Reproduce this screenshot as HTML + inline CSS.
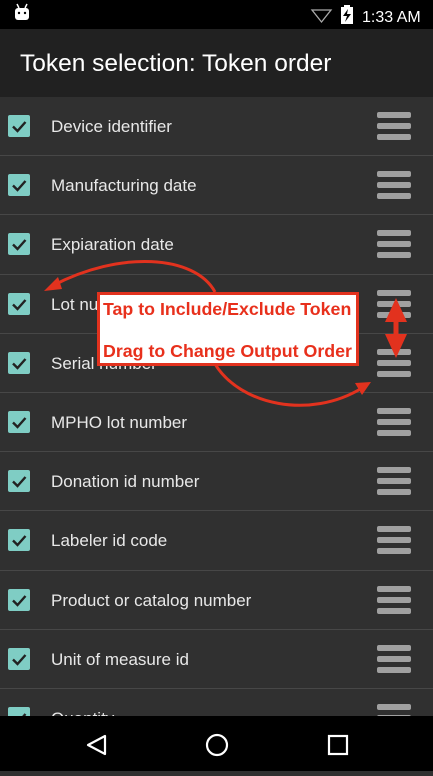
<!DOCTYPE html><html><head><style>
body{margin:0;width:433px;height:771px;overflow:hidden;background:#303030;font-family:"Liberation Sans",sans-serif;position:relative}
.sb{position:absolute;left:0;top:0;width:433px;height:29px;background:#000;color:#fff}
.ab{position:absolute;left:0;top:29px;width:433px;height:68px;background:#212121;color:#fff;font-size:24.5px}
.ab span{position:absolute;left:20px;top:21px}
.row{position:absolute;left:0;width:433px;height:59px;border-bottom:1px solid #474747;background:#303030}
.cb{position:absolute;left:8px;top:18px;width:22px;height:22px;background:#7fcdc4;border-radius:2px}
.row .t{position:absolute;left:51px;top:20px;color:#e8e8e8;font-size:17px}
.h{position:absolute;left:377px;width:34px;height:6px;background:#a0a0a0;border-radius:2px}
.nav{position:absolute;left:0;top:716px;width:433px;height:55px;background:#000}
.box{position:absolute;left:97px;top:292px;width:256px;height:68px;border:3px solid #e2321e;background:#fff;color:#e8301c;font-weight:bold;font-size:17.8px;white-space:nowrap}
</style></head><body>
<div class="sb">
<svg width="433" height="29" style="position:absolute;left:0;top:0">
<rect x="15" y="8" width="14" height="12" rx="3" fill="#fff"/><line x1="17" y1="4" x2="19" y2="8" stroke="#fff" stroke-width="1.5"/><line x1="27" y1="4" x2="25" y2="8" stroke="#fff" stroke-width="1.5"/><circle cx="19" cy="13" r="1.2" fill="#000"/><circle cx="25" cy="13" r="1.2" fill="#000"/>
<path d="M312 10 L331 10 L321.5 22 Z" fill="none" stroke="#aaa" stroke-width="1.3"/>
<rect x="341" y="7" width="12" height="17" fill="#fff"/><rect x="344" y="5" width="6" height="3" fill="#fff"/><path d="M348 9 L343 16 L347 16 L345 22 L351 14 L347 14 Z" fill="#000"/>
<text x="362" y="22" fill="#fff" font-size="16" font-family="Liberation Sans">1:33 AM</text>
</svg></div>
<div class="ab"><span>Token selection: Token order</span></div>
<div id="list"></div>
<script>
var n=["Device identifier","Manufacturing date","Expiaration date","Lot number","Serial number","MPHO lot number","Donation id number","Labeler id code","Product or catalog number","Unit of measure id","Quantity"];
var h="";for(var i=0;i<n.length;i++){var y=97+i*59.2;h+='<div class="row" style="top:'+y+'px;height:58.2px"><div class="cb"><svg width="22" height="22"><path d="M5 11.5 L9.5 16 L17.5 7" fill="none" stroke="#222" stroke-width="2.4"/></svg></div><div class="t">'+n[i]+'</div><div class="h" style="top:15px"></div><div class="h" style="top:26px"></div><div class="h" style="top:37px"></div></div>';}
document.getElementById("list").innerHTML=h;
</script>
<svg width="433" height="771" style="position:absolute;left:0;top:0">
<path d="M215 292 C195 255 120 250 52 286" fill="none" stroke="#e2321e" stroke-width="3"/>
<path d="M44 291 L58 277 L62 289 Z" fill="#e2321e"/>
<path d="M215 364 C240 405 310 420 362 388" fill="none" stroke="#e2321e" stroke-width="3"/>
<path d="M371 382 L355 383 L362 395 Z" fill="#e2321e"/>
<path d="M396 298 L385 322 L407 322 Z M396 358 L385 334 L407 334 Z" fill="#e2321e"/>
<rect x="393.5" y="318" width="5" height="20" fill="#e2321e"/>
</svg>
<div class="box"><div style="position:absolute;left:3px;top:4px">Tap to Include/Exclude Token</div><div style="position:absolute;left:3px;top:46px">Drag to Change Output Order</div></div>
<div class="nav"><svg width="433" height="55">
<path d="M88 29 L105 20 L105 38 Z" fill="none" stroke="#fff" stroke-width="2.2" stroke-linejoin="round"/>
<circle cx="217" cy="29" r="10" fill="none" stroke="#fff" stroke-width="2.2"/>
<rect x="329" y="20" width="18" height="18" fill="none" stroke="#fff" stroke-width="2.2"/>
</svg></div>
</body></html>
